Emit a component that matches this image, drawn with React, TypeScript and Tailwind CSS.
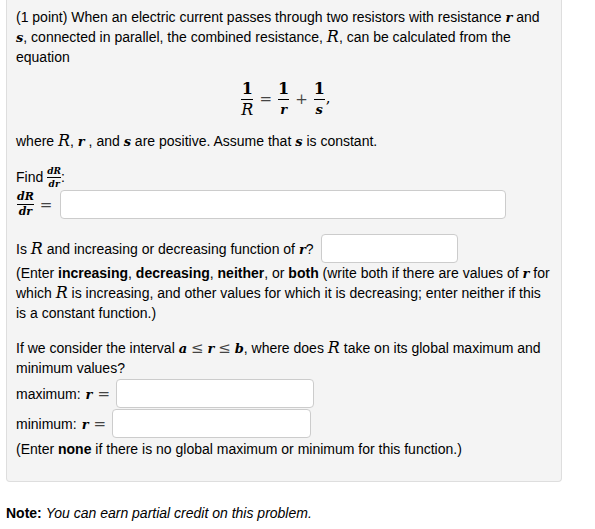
import React from "react";

function V({ children, big = false }: { children: React.ReactNode; big?: boolean }) {
  return big ? (
    <span className="[font-family:'DejaVu_Serif',serif] italic text-[16px] leading-none">{children}</span>
  ) : (
    <span className="[font-family:'DejaVu_Serif',serif] italic font-bold text-[13px] leading-none">{children}</span>
  );
}

function Op({ children }: { children: React.ReactNode }) {
  return <span className="[font-family:'DejaVu_Serif',serif] text-[15px] leading-none text-[#444]">{children}</span>;
}

function BigFrac({ den }: { den: React.ReactNode }) {
  return (
    <span className="inline-flex flex-col items-center">
      <span className="[font-family:'DejaVu_Serif',serif] font-bold text-[16px] leading-[16px]">1</span>
      <span className="self-stretch h-px bg-black mt-[2px] mb-[2px]" />
      <span className="leading-[16px] flex items-center h-[16px]">{den}</span>
    </span>
  );
}

function SmallFrac({ size }: { size: "s" | "m" }) {
  const cls =
    size === "s"
      ? "[font-family:'DejaVu_Serif',serif] italic font-bold text-[9px] leading-[10px]"
      : "[font-family:'DejaVu_Serif',serif] italic font-bold text-[11px] leading-[12px]";
  return (
    <span className="inline-flex flex-col items-center align-middle">
      <span className={cls}>dR</span>
      <span className="self-stretch h-px bg-black my-[1px]" />
      <span className={cls}>dr</span>
    </span>
  );
}

function Input({ w }: { w: string }) {
  return <div className={`h-[29px] bg-white border border-[#cccccc] rounded-[4px] ${w}`} />;
}

export default function App() {
  return (
    <div className="w-[595px] h-[529px] bg-white text-black [font-family:'Liberation_Sans',Arial,sans-serif] text-[14px] leading-[20px] overflow-hidden">
      <div className="ml-[6px] w-[556px] bg-[#f4f4f4] border border-t-0 border-[#dedede] rounded-b-[4px] px-[9px] pt-[7px] pb-[22px]">
        <p>
          (1 point) When an electric current passes through two resistors with resistance <V>r</V> and <V>s</V>,
          connected in parallel, the combined resistance, <V big>R</V>, can be calculated from the equation
        </p>
        <div className="flex justify-center items-center h-[40px] my-[12px] gap-[6px] pl-[4px]">
          <BigFrac den={<V big>R</V>} />
          <Op>=</Op>
          <BigFrac den={<V>r</V>} />
          <Op>+</Op>
          <BigFrac den={<V>s</V>} />
          <span className="[font-family:'DejaVu_Serif',serif] text-[15px] leading-none -ml-[5px] -mt-[2px]">,</span>
        </div>
        <p>
          where <V big>R</V>, <V>r</V> , and <V>s</V> are positive. Assume that <V>s</V> is constant.
        </p>
        <div className="mt-[16px] h-[20px] flex items-center">
          <span>Find</span>
          <span className="ml-[4px]">
            <SmallFrac size="s" />
          </span>
          <span>:</span>
        </div>
        <div className="mt-[3px] flex items-center h-[29px]">
          <span className="ml-[1px]">
            <SmallFrac size="m" />
          </span>
          <span className="ml-[6px]">
            <Op>=</Op>
          </span>
          <div className="ml-[8px]">
            <Input w="w-[446px]" />
          </div>
        </div>
        <div className="mt-[15px] flex items-center h-[29px]">
          <span>
            Is <V big>R</V> and increasing or decreasing function of <V>r</V>?
          </span>
          <div className="ml-[7px]">
            <Input w="w-[137px]" />
          </div>
        </div>
        <p>
          (Enter <b>increasing</b>, <b>decreasing</b>, <b>neither</b>, or <b>both</b> (write both if there are values of{" "}
          <V>r</V> for which <V big>R</V> is increasing, and other values for which it is decreasing; enter neither if this
          is a constant function.)
        </p>
        <p className="mt-[15px]">
          If we consider the interval <V>a</V> <Op>≤</Op> <V>r</V> <Op>≤</Op> <V>b</V>, where does <V big>R</V> take on its
          global maximum and minimum values?
        </p>
        <div className="mt-[1px] flex items-center h-[29px]">
          <span>maximum:</span>
          <span className="ml-[5px]">
            <V>r</V>
          </span>
          <span className="ml-[5px]">
            <Op>=</Op>
          </span>
          <div className="ml-[6px]">
            <Input w="w-[198px]" />
          </div>
        </div>
        <div className="mt-[1px] flex items-center h-[29px]">
          <span>minimum:</span>
          <span className="ml-[5px]">
            <V>r</V>
          </span>
          <span className="ml-[5px]">
            <Op>=</Op>
          </span>
          <div className="ml-[6px]">
            <Input w="w-[199px]" />
          </div>
        </div>
        <p className="mt-[1px]">
          (Enter <b>none</b> if there is no global maximum or minimum for this function.)
        </p>
      </div>
      <p className="ml-[6px] mt-[21px]">
        <b>Note:</b> <i>You can earn partial credit on this problem.</i>
      </p>
    </div>
  );
}
